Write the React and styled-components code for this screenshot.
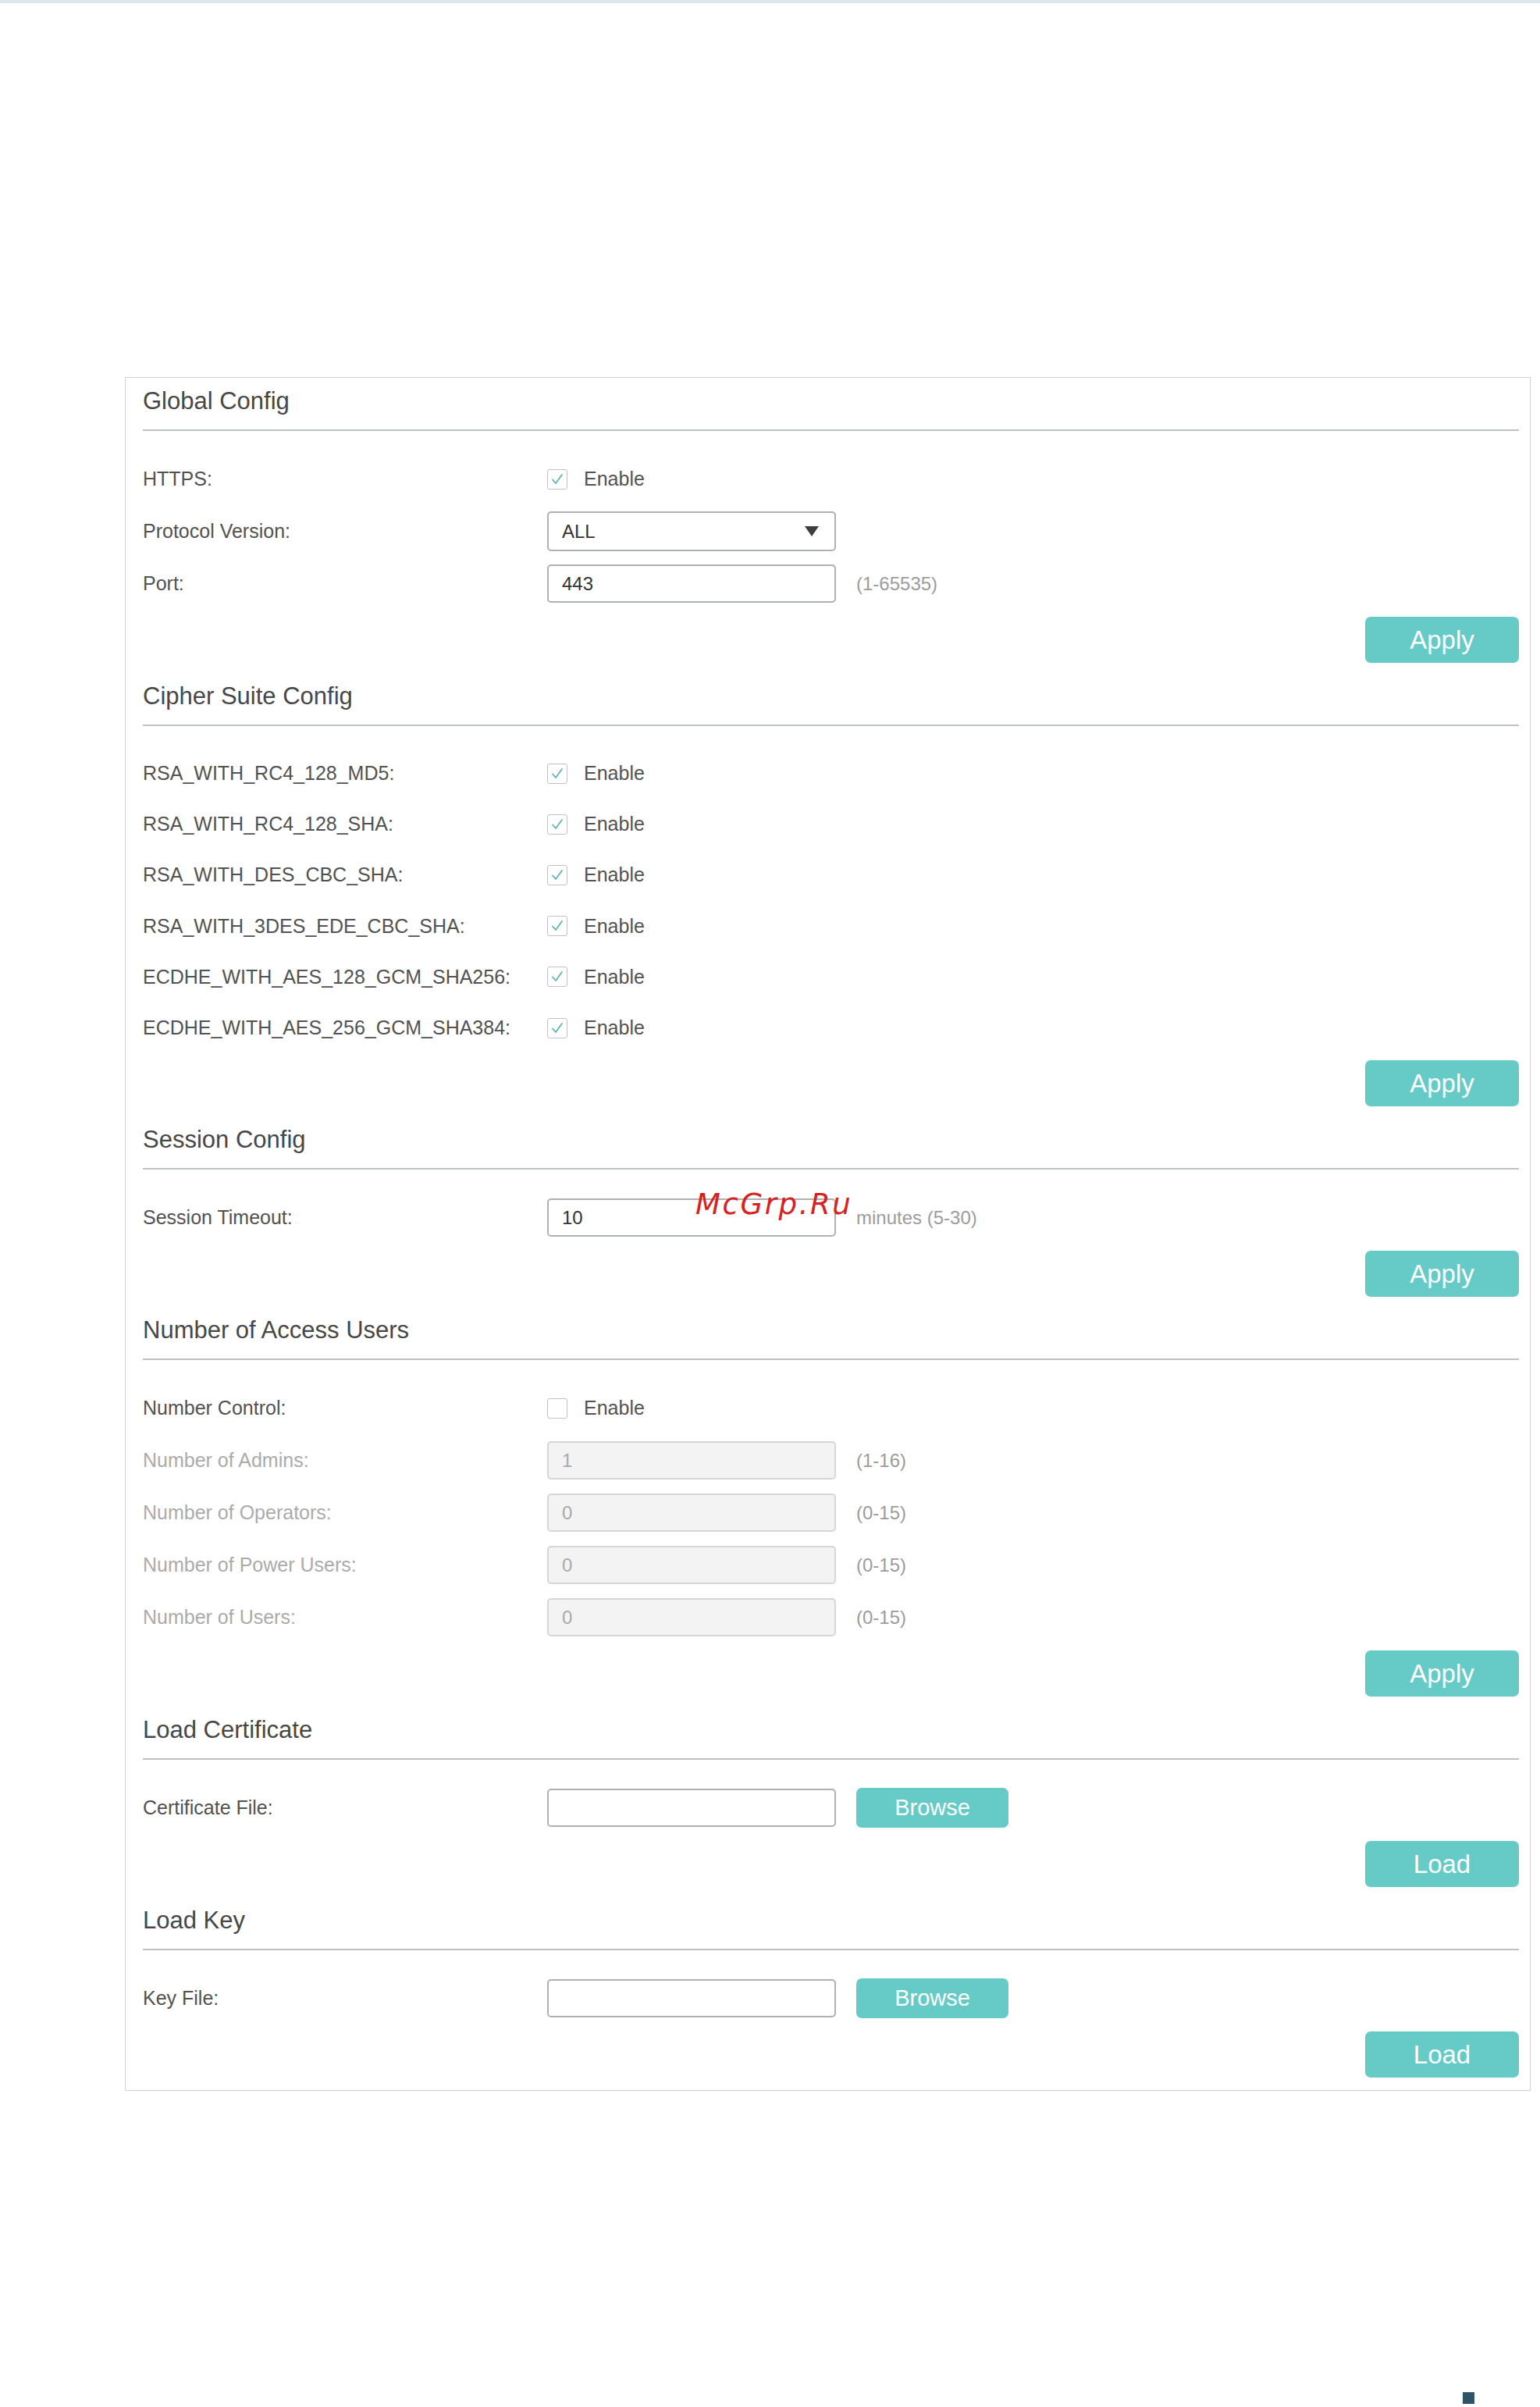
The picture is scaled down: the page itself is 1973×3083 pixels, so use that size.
import React from "react";
import styled, { createGlobalStyle, css } from "styled-components";

const GlobalStyle = createGlobalStyle`
  html, body {
    margin: 0;
    padding: 0;
    background: #ffffff;
  }
  body {
    font-family: "Liberation Sans", Arial, sans-serif;
    color: #555;
  }
`;

const Root = styled.div`
  position: relative;
  width: 1973px;
  min-height: 3083px;
`;

const TopBar = styled.div`
  height: 4px;
  background: #dde7ec;
`;

const Page = styled.main`
  padding: 479px 12px 0 160px;
`;

const Panel = styled.section`
  box-sizing: border-box;
  border: 1px solid #d2d2d2;
  padding: 11px 14px 16px 22px;
`;

const Section = styled.div`
  & + & {
    margin-top: 24px;
  }
`;

const Title = styled.h2`
  margin: 0;
  font-size: 31px;
  line-height: 37px;
  font-weight: 400;
  color: #474747;
  padding-bottom: 18px;
  border-bottom: 2px solid #bdc1c4;
`;

const Rows = styled.div`
  margin-top: 28px;
`;

const Row = styled.div`
  display: grid;
  grid-template-columns: 518px 1fr;
  align-items: center;
  height: ${(p) => p.$h || 67}px;
`;

const Label = styled.span`
  font-size: 25px;
  color: ${(p) => (p.$disabled ? "#ababab" : "#525252")};
  white-space: nowrap;
`;

const Controls = styled.div`
  display: flex;
  align-items: center;
  gap: 26px;
`;

const CheckWrap = styled.label`
  display: flex;
  align-items: center;
  gap: 21px;
  font-size: 25px;
  color: #535353;
`;

const Box = styled.span`
  box-sizing: border-box;
  width: 26px;
  height: 26px;
  border: 1.5px solid #c2c2c2;
  border-radius: 3px;
  background: #fff;
  display: flex;
  align-items: center;
  justify-content: center;
`;

const fieldBase = css`
  box-sizing: border-box;
  width: 370px;
  height: 49px;
  border: 2px solid #aeb1b4;
  border-radius: 5px;
  padding: 0 0 0 17px;
  font-family: "Liberation Sans", Arial, sans-serif;
  font-size: 24px;
  color: #333;
  background: #fff;
`;

const Input = styled.input`
  ${fieldBase}
  outline: none;
  &:disabled {
    background: #f3f3f3;
    border-color: #d6d6d6;
    color: #aaa;
  }
`;

const Select = styled.div`
  ${fieldBase}
  height: 51px;
  display: flex;
  align-items: center;
  justify-content: space-between;
  padding-right: 20px;
`;

const Hint = styled.span`
  font-size: 24px;
  color: #9c9c9c;
  white-space: nowrap;
`;

const ButtonRow = styled.div`
  display: flex;
  justify-content: flex-end;
  margin-top: 9px;
`;

const Button = styled.button`
  box-sizing: border-box;
  width: ${(p) => (p.$small ? 195 : 197)}px;
  height: ${(p) => (p.$small ? 51 : 59)}px;
  border: none;
  border-radius: 7px;
  background: #66cbc6;
  color: #fff;
  font-family: "Liberation Sans", Arial, sans-serif;
  font-size: ${(p) => (p.$small ? 29 : 33)}px;
  line-height: 1;
  padding: 0;
  cursor: pointer;
`;

const Footer = styled.div`
  display: flex;
  justify-content: flex-end;
  padding-right: 72px;
  margin-top: 386px;
`;

const Marker = styled.span`
  width: 15px;
  height: 15px;
  background: #2c5668;
`;

const Watermark = styled.div`
  position: absolute;
  left: 891px;
  top: 1524px;
  font-family: "DejaVu Sans", sans-serif;
  font-style: italic;
  font-size: 37px;
  line-height: 37px;
  letter-spacing: 2.6px;
  color: #d92020;
  pointer-events: none;
`;

const Check = ({ checked }) => (
  <Box>
    {checked && (
      <svg width="18" height="18" viewBox="0 0 18 18" fill="none">
        <path d="M3 9.5 L7 14 L15 3" stroke="#58b3b0" strokeWidth="1.7" strokeLinecap="round" strokeLinejoin="round" />
      </svg>
    )}
  </Box>
);

const CheckField = ({ checked }) => (
  <CheckWrap>
    <Check checked={checked} />
    Enable
  </CheckWrap>
);

const Arrow = () => (
  <svg width="18" height="13" viewBox="0 0 18 13">
    <path d="M0 0 H18 L9 13 Z" fill="#3a3f44" />
  </svg>
);

const ciphers = [
  "RSA_WITH_RC4_128_MD5:",
  "RSA_WITH_RC4_128_SHA:",
  "RSA_WITH_DES_CBC_SHA:",
  "RSA_WITH_3DES_EDE_CBC_SHA:",
  "ECDHE_WITH_AES_128_GCM_SHA256:",
  "ECDHE_WITH_AES_256_GCM_SHA384:",
];

const users = [
  ["Number of Admins:", "1", "(1-16)"],
  ["Number of Operators:", "0", "(0-15)"],
  ["Number of Power Users:", "0", "(0-15)"],
  ["Number of Users:", "0", "(0-15)"],
];

export default function App() {
  return (
    <Root>
      <GlobalStyle />
      <TopBar />
      <Page>
        <Panel>
          <Section>
            <Title>Global Config</Title>
            <Rows>
              <Row>
                <Label>HTTPS:</Label>
                <Controls>
                  <CheckField checked />
                </Controls>
              </Row>
              <Row>
                <Label>Protocol Version:</Label>
                <Controls>
                  <Select>
                    <span>ALL</span>
                    <Arrow />
                  </Select>
                </Controls>
              </Row>
              <Row>
                <Label>Port:</Label>
                <Controls>
                  <Input defaultValue="443" />
                  <Hint>(1-65535)</Hint>
                </Controls>
              </Row>
            </Rows>
            <ButtonRow>
              <Button>Apply</Button>
            </ButtonRow>
          </Section>

          <Section>
            <Title>Cipher Suite Config</Title>
            <Rows>
              {ciphers.map((c) => (
                <Row key={c} $h={65.2}>
                  <Label>{c}</Label>
                  <Controls>
                    <CheckField checked />
                  </Controls>
                </Row>
              ))}
            </Rows>
            <ButtonRow>
              <Button>Apply</Button>
            </ButtonRow>
          </Section>

          <Section>
            <Title>Session Config</Title>
            <Rows>
              <Row>
                <Label>Session Timeout:</Label>
                <Controls>
                  <Input defaultValue="10" />
                  <Hint>minutes (5-30)</Hint>
                </Controls>
              </Row>
            </Rows>
            <ButtonRow>
              <Button>Apply</Button>
            </ButtonRow>
          </Section>

          <Section>
            <Title>Number of Access Users</Title>
            <Rows>
              <Row>
                <Label>Number Control:</Label>
                <Controls>
                  <CheckField />
                </Controls>
              </Row>
              {users.map(([l, v, h]) => (
                <Row key={l}>
                  <Label $disabled>{l}</Label>
                  <Controls>
                    <Input disabled defaultValue={v} />
                    <Hint>{h}</Hint>
                  </Controls>
                </Row>
              ))}
            </Rows>
            <ButtonRow>
              <Button>Apply</Button>
            </ButtonRow>
          </Section>

          <Section>
            <Title>Load Certificate</Title>
            <Rows>
              <Row>
                <Label>Certificate File:</Label>
                <Controls>
                  <Input />
                  <Button $small>Browse</Button>
                </Controls>
              </Row>
            </Rows>
            <ButtonRow>
              <Button>Load</Button>
            </ButtonRow>
          </Section>

          <Section>
            <Title>Load Key</Title>
            <Rows>
              <Row>
                <Label>Key File:</Label>
                <Controls>
                  <Input />
                  <Button $small>Browse</Button>
                </Controls>
              </Row>
            </Rows>
            <ButtonRow>
              <Button>Load</Button>
            </ButtonRow>
          </Section>
        </Panel>
        <Footer>
          <Marker />
        </Footer>
      </Page>
      <Watermark>McGrp.Ru</Watermark>
    </Root>
  );
}
